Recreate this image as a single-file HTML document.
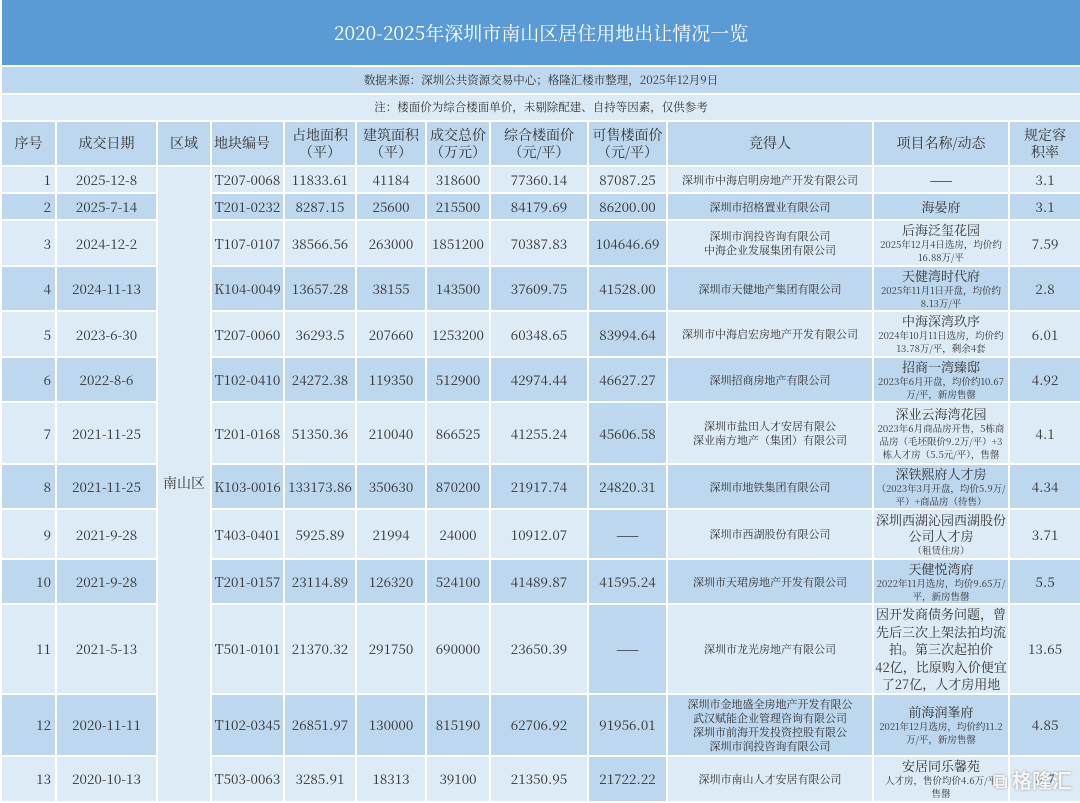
<!DOCTYPE html>
<html><head><meta charset="utf-8"><style>
*{margin:0;padding:0;box-sizing:border-box}
body{width:1080px;height:798px;overflow:hidden;background:#fff;font-family:"Noto Serif CJK SC","Liberation Serif",serif;color:#333}
table{border-collapse:collapse;table-layout:fixed;width:1080px}
td{border:2px solid #fff;text-align:center;vertical-align:middle;font-size:13.5px;line-height:15px;overflow:hidden;background:#ddebf7;white-space:nowrap}
.t td{background:#5b9bd5;color:#fff;font-size:19px;font-weight:normal;height:66px;border-top:0}
.s td{background:#bdd7ee;height:28px;font-size:11.5px}
.n td{background:#ddebf7;height:27px;font-size:11.5px}
.h td{background:#bdd7ee;font-size:14px;line-height:17px}
.d td{background:#bdd7ee}
td.k{background:#bdd7ee}
.sm{font-size:9.5px;line-height:13px;display:block}
.big{font-size:13px;line-height:16px;display:block}
.r{text-align:right;padding-right:4px}
.l{text-align:left;padding-left:6px}
.sm2{font-size:11px;line-height:14px}
.wm{position:absolute;right:8px;bottom:4px;color:rgba(255,255,255,.9);font-size:20px;font-weight:bold;font-family:"Noto Sans CJK SC",sans-serif;text-shadow:0 0 2px #888}
</style></head><body>
<table>
<colgroup><col style="width:55px"><col style="width:101px"><col style="width:54px"><col style="width:73px"><col style="width:72px"><col style="width:70px"><col style="width:64px"><col style="width:98px"><col style="width:79px"><col style="width:206px"><col style="width:136px"><col style="width:72px"></colgroup>
<tr class="t"><td colspan="12">2020-2025年深圳市南山区居住用地出让情况一览</td></tr>
<tr class="s"><td colspan="12">数据来源：深圳公共资源交易中心；格隆汇楼市整理，2025年12月9日</td></tr>
<tr class="n"><td colspan="12">注：楼面价为综合楼面单价，未剔除配建、自持等因素，仅供参考</td></tr>
<tr class="h" style="height:45px"><td>序号</td><td>成交日期</td><td>区域</td><td class="l" style="padding-left:2px">地块编号</td><td>占地面积<br>（平）</td><td>建筑面积<br>（平）</td><td>成交总价<br>（万元）</td><td>综合楼面价<br>（元/平）</td><td>可售楼面价<br>（元/平）</td><td>竞得人</td><td>项目名称/动态</td><td>规定容<br>积率</td></tr>
<tr style="height:27px"><td class="r">1</td><td>2025-12-8</td><td rowspan="13" style="font-size:14px">南山区</td><td>T207-0068</td><td>11833.61</td><td>41184</td><td>318600</td><td>77360.14</td><td>87087.25</td><td class="sm2">深圳市中海启明房地产开发有限公司</td><td>——</td><td>3.1</td></tr>
<tr class="d" style="height:27px"><td class="r">2</td><td>2025-7-14</td><td>T201-0232</td><td>8287.15</td><td>25600</td><td>215500</td><td>84179.69</td><td>86200.00</td><td class="sm2">深圳市招格置业有限公司</td><td><span class="big">海晏府</span></td><td>3.1</td></tr>
<tr style="height:46px"><td class="r">3</td><td>2024-12-2</td><td>T107-0107</td><td>38566.56</td><td>263000</td><td>1851200</td><td>70387.83</td><td class="k">104646.69</td><td class="sm2">深圳市润投咨询有限公司<br>中海企业发展集团有限公司</td><td><span class="big">后海泛玺花园</span><span class="sm">2025年12月4日选房，均价约<br>16.88万/平</span></td><td>7.59</td></tr>
<tr class="d" style="height:45px"><td class="r">4</td><td>2024-11-13</td><td>K104-0049</td><td>13657.28</td><td>38155</td><td>143500</td><td>37609.75</td><td>41528.00</td><td class="sm2">深圳市天健地产集团有限公司</td><td><span class="big">天健湾时代府</span><span class="sm">2025年11月1日开盘，均价约<br>8.13万/平</span></td><td>2.8</td></tr>
<tr style="height:46px"><td class="r">5</td><td>2023-6-30</td><td>T207-0060</td><td>36293.5</td><td>207660</td><td>1253200</td><td>60348.65</td><td class="k">83994.64</td><td class="sm2">深圳市中海启宏房地产开发有限公司</td><td><span class="big">中海深湾玖序</span><span class="sm">2024年10月11日选房，均价约<br>13.78万/平，剩余4套</span></td><td>6.01</td></tr>
<tr class="d" style="height:45px"><td class="r">6</td><td>2022-8-6</td><td>T102-0410</td><td>24272.38</td><td>119350</td><td>512900</td><td>42974.44</td><td>46627.27</td><td class="sm2">深圳招商房地产有限公司</td><td><span class="big">招商一湾臻邸</span><span class="sm">2023年6月开盘，均价约10.67<br>万/平，新房售罄</span></td><td>4.92</td></tr>
<tr style="height:62px"><td class="r">7</td><td>2021-11-25</td><td>T201-0168</td><td>51350.36</td><td>210040</td><td>866525</td><td>41255.24</td><td class="k">45606.58</td><td class="sm2">深圳市盐田人才安居有限公<br>深业南方地产（集团）有限公司</td><td><span class="big">深业云海湾花园</span><span class="sm">2023年6月商品房开售，5栋商<br>品房（毛坯限价9.2万/平）+3<br>栋人才房（5.5元/平），售罄</span></td><td>4.1</td></tr>
<tr class="d" style="height:45px"><td class="r">8</td><td>2021-11-25</td><td>K103-0016</td><td>133173.86</td><td>350630</td><td>870200</td><td>21917.74</td><td>24820.31</td><td class="sm2">深圳市地铁集团有限公司</td><td><span class="big">深铁熙府人才房</span><span class="sm">（2023年3月开盘，均价5.9万/<br>平）+商品房（待售）</span></td><td>4.34</td></tr>
<tr style="height:50px"><td class="r">9</td><td>2021-9-28</td><td>T403-0401</td><td>5925.89</td><td>21994</td><td>24000</td><td>10912.07</td><td class="k">——</td><td class="sm2">深圳市西湖股份有限公司</td><td><span class="big">深圳西湖沁园西湖股份<br>公司人才房</span><span class="sm">（租赁住房）</span></td><td>3.71</td></tr>
<tr class="d" style="height:45px"><td class="r">10</td><td>2021-9-28</td><td>T201-0157</td><td>23114.89</td><td>126320</td><td>524100</td><td>41489.87</td><td>41595.24</td><td class="sm2">深圳市天珺房地产开发有限公司</td><td><span class="big">天健悦湾府</span><span class="sm">2022年11月选房，均价9.65万/<br>平，新房售罄</span></td><td>5.5</td></tr>
<tr style="height:87px"><td class="r">11</td><td>2021-5-13</td><td>T501-0101</td><td>21370.32</td><td>291750</td><td>690000</td><td>23650.39</td><td class="k">——</td><td class="sm2">深圳市龙光房地产有限公司</td><td><span class="big" style="line-height:17.5px">因开发商债务问题，曾<br>先后三次上架法拍均流<br>拍。第三次起拍价<br>42亿，比原购入价便宜<br>了27亿，人才房用地</span></td><td>13.65</td></tr>
<tr class="d" style="height:62px"><td class="r">12</td><td>2020-11-11</td><td>T102-0345</td><td>26851.97</td><td>130000</td><td>815190</td><td>62706.92</td><td>91956.01</td><td class="sm2">深圳市金地盛全房地产开发有限公<br>武汉赋能企业管理咨询有限公司<br>深圳市前海开发投资控股有限公<br>深圳市润投咨询有限公司</td><td><span class="big">前海润峯府</span><span class="sm">2021年12月选房，均价约11.2<br>万/平，新房售罄</span></td><td>4.85</td></tr>
<tr style="height:46px"><td class="r">13</td><td>2020-10-13</td><td>T503-0063</td><td>3285.91</td><td>18313</td><td>39100</td><td>21350.95</td><td class="k">21722.22</td><td class="sm2">深圳市南山人才安居有限公司</td><td><span class="big">安居同乐馨苑</span><span class="sm">人才房，售价均价4.6万/平<br>售罄</span></td><td>5.7</td></tr>
</table>
<div class="wm">⧉ 格隆汇</div>
</body></html>
